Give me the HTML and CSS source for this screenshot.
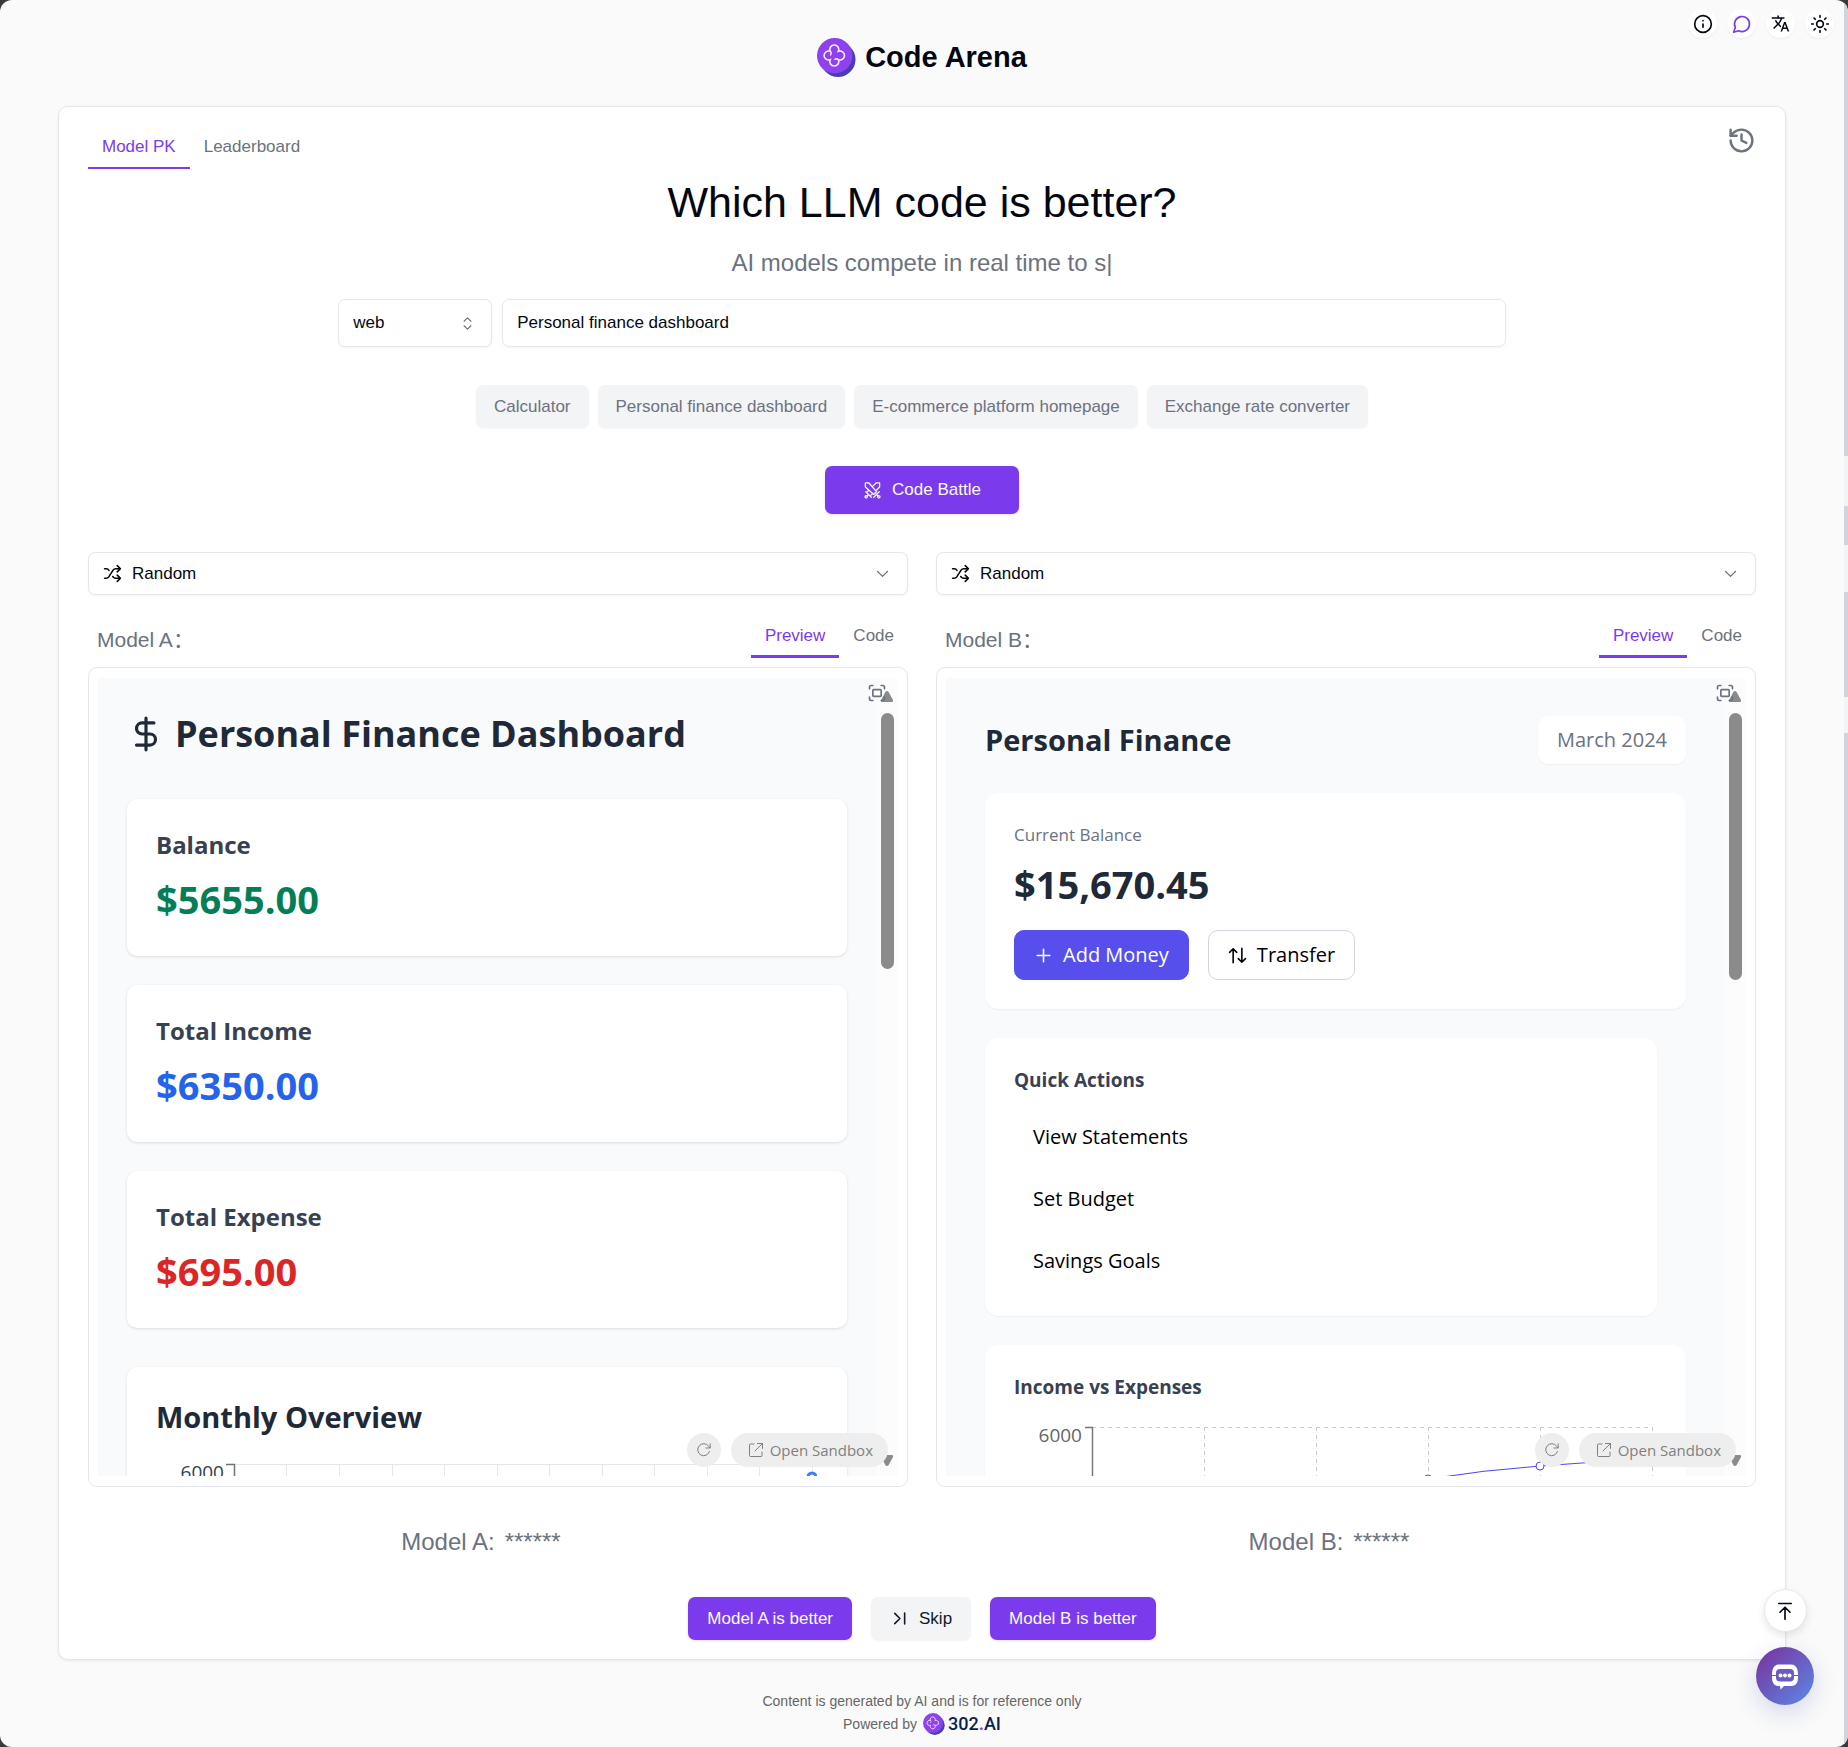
FILE: index.html
```html
<!DOCTYPE html>
<html lang="en">
<head>
<meta charset="utf-8">
<meta name="viewport" content="width=device-width, initial-scale=1">
<title>Code Arena</title>
<link rel="stylesheet" href="styles.css">
</head>
<body>
<svg class="sprite" aria-hidden="true">
  <symbol id="logo" viewBox="0 0 39 39">
    <circle cx="21" cy="21.500" r="17.500" fill="#4a3cb4"/>
    <circle cx="17.700" cy="17.700" r="17.700" fill="#8d42ee"/>
    <path d="M13.200 13.300a4.500 4.500 0 1 1 8.200 0a4.500 4.500 0 1 1 0 8.400a4.500 4.500 0 1 1-8.200 0a4.500 4.500 0 1 1 0-8.400z" fill="none" stroke="#fbe9ff" stroke-width="1.600"/>
    <path d="M13.200 13.300q2 2 0 4.200M21.400 21.700q-2-2-4 0" fill="none" stroke="#fbe9ff" stroke-width="1.300"/>
  </symbol>
  <symbol id="shuffle" viewBox="0 0 24 24"><path d="m18 14 4 4-4 4M18 2l4 4-4 4M2 18h1.973a4 4 0 0 0 3.300-1.700l5.454-8.600a4 4 0 0 1 3.300-1.700H22M2 6h1.972a4 4 0 0 1 3.600 2.200M22 18h-6.041a4 4 0 0 1-3.300-1.800l-.359-.450"/></symbol>
  <symbol id="chevron" viewBox="0 0 15 15"><path d="M3 5.500 7.500 10 12 5.500"/></symbol>
  <symbol id="expand" viewBox="0 0 24 24"><path d="M3 7V5a2 2 0 0 1 2-2h2M17 3h2a2 2 0 0 1 2 2v2M21 17v2a2 2 0 0 1-2 2h-2M7 21H5a2 2 0 0 1-2-2v-2"/><rect x="7" y="8" width="10" height="8" rx="1"/></symbol>
  <symbol id="reload" viewBox="0 0 16 16"><path d="M13.500 9.500A6 6 0 1 1 12.600 4.200L14 5.800M14.200 1.800v4.200H10"/></symbol>
  <symbol id="external" viewBox="0 0 16 16"><path d="M6 2H2.500a1 1 0 0 0-1 1v10.500a1 1 0 0 0 1 1H13a1 1 0 0 0 1-1V10M9.500 1.500h5v5M14.500 1.500 7 9"/></symbol>
</svg>
<div class="page">
  <div class="page-main">
    <header class="header">
      <div class="brand"><svg class="brand-logo"><use href="#logo"/></svg><h1 class="brand-name">Code Arena</h1></div>
      <nav class="tools" aria-label="Tools">
        <button class="tool" aria-label="About"><svg class="ico ico-20" viewBox="0 0 24 24"><circle cx="12" cy="12" r="10"/><path d="M12 16v-4M12 8h.01"/></svg></button>
        <button class="tool tool-accent" aria-label="Feedback"><svg class="ico ico-20" viewBox="0 0 24 24"><path d="M7.900 20A9 9 0 1 0 4 16.100L2 22Z"/></svg></button>
        <button class="tool" aria-label="Language"><svg class="ico-fill" viewBox="0 0 24 24"><path d="m12.870 15.070-2.540-2.510.03-.03c1.740-1.940 2.980-4.170 3.710-6.530H17V4h-7V2H8v2H1v1.990h11.170C11.500 7.920 10.440 9.750 9 11.350 8.070 10.320 7.300 9.190 6.690 8h-2c.73 1.630 1.730 3.170 2.980 4.560l-5.090 5.020L4 19l5-5 3.110 3.110.76-2.040zM18.500 10h-2L12 22h2l1.120-3h4.750L21 22h2l-4.500-12zm-2.620 7 1.620-4.330L19.120 17h-3.240z"/></svg></button>
        <button class="tool" aria-label="Theme"><svg class="ico ico-20" viewBox="0 0 24 24"><circle cx="12" cy="12" r="4"/><path d="M12 2v2M12 20v2M4.930 4.930l1.410 1.410M17.660 17.660l1.410 1.410M2 12h2M20 12h2M6.340 17.660l-1.410 1.410M19.070 4.930l-1.410 1.410"/></svg></button>
      </nav>
    </header>

    <main class="board">
      <div class="board-top">
        <div class="tabs">
          <button class="tab is-active">Model PK</button><button class="tab">Leaderboard</button>
        </div>
        <button class="history" aria-label="History"><svg class="ico ico-29" viewBox="0 0 24 24"><path d="M3 12a9 9 0 1 0 9-9 9.750 9.750 0 0 0-6.740 2.740L3 8"/><path d="M3 3v5h5M12 7v5l4 2"/></svg></button>
      </div>

      <h2 class="title">Which LLM code is better?</h2>
      <p class="subtitle">AI models compete in real time to s|</p>

      <form class="prompt">
        <div class="pick pick-type">
          <select class="pick-field" aria-label="Type"><option>web</option></select>
          <svg class="ico pick-arrow" viewBox="0 0 15 15"><path d="M4.500 5.500 7.500 2.500l3 3M4.500 9.500l3 3 3-3"/></svg>
        </div>
        <input class="prompt-text" type="text" aria-label="Prompt" value="Personal finance dashboard">
      </form>

      <div class="chips">
        <button class="chip">Calculator</button>
        <button class="chip">Personal finance dashboard</button>
        <button class="chip">E-commerce platform homepage</button>
        <button class="chip">Exchange rate converter</button>
      </div>

      <button class="btn btn-primary btn-battle"><svg class="ico ico-19 ico-swords" viewBox="0 0 24 24"><path d="M3 2.500h4.500L17 13.500l-3.500 3.500L3 7.500zM12.500 6.500l4-4H21v5l-4.500 4.500M7.500 11.500l-3 3M9.500 18.500l3-3M3.500 13.500l7 7M20.500 13.500l-7 7M7 17l-2 2M17 17l2 2"/><circle cx="4" cy="20" r="1.500"/><circle cx="20" cy="20" r="1.500"/></svg>Code Battle</button>

      <div class="arena">
        <section class="side">
          <div class="pick pick-model">
            <svg class="ico ico-19 pick-icon"><use href="#shuffle"/></svg>
            <select class="pick-field" aria-label="Model A choice"><option>Random</option></select>
            <svg class="ico pick-arrow"><use href="#chevron"/></svg>
          </div>
          <div class="side-bar">
            <h3 class="side-name">Model A：</h3>
            <div class="tabs tabs-side"><button class="tab is-active">Preview</button><button class="tab">Code</button></div>
          </div>
          <div class="frame">
            <div class="view">
              <div class="doc doc-a">
                <h1 class="a-title"><svg class="ico a-dollar" viewBox="0 0 24 24"><path d="M12 2v20M17 5H9.500a3.500 3.500 0 0 0 0 7h5a3.500 3.500 0 0 1 0 7H6"/></svg>Personal Finance Dashboard</h1>
                <div class="a-cards">
                  <div class="a-card"><h2 class="a-label">Balance</h2><p class="a-sum green">$5655.00</p></div>
                  <div class="a-card"><h2 class="a-label">Total Income</h2><p class="a-sum blue">$6350.00</p></div>
                  <div class="a-card"><h2 class="a-label">Total Expense</h2><p class="a-sum red">$695.00</p></div>
                </div>
                <div class="a-card">
                  <h2 class="a-heading">Monthly Overview</h2>
                  <svg class="chart chart-a" width="661" height="60" role="img" aria-label="Monthly chart">
                    <g stroke="#e5e7eb" stroke-width="1"><path d="M78 16.500H656"/><path d="M130.500 17v43M183.500 17v43M236.500 17v43M288.500 17v43M341.500 17v43M393.500 17v43M446.500 17v43M498.500 17v43M551.500 17v43M603.500 17v43M656.500 17v43"/></g>
                    <path d="M70 16.500h8.500V60" fill="none" stroke="#6b7280" stroke-width="1.500"/>
                    <circle cx="656" cy="29" r="4" fill="#fff" stroke="#3b82f6" stroke-width="3"/>
                    <text x="68" y="31" text-anchor="end" class="tick-a">6000</text>
                  </svg>
                </div>
              </div>
              <div class="rail" aria-hidden="true"><svg class="rail-up" viewBox="0 0 12 11"><path d="M6 0q1 0 1.600 1L12 9q.3 2-1 2H1q-1.300 0-1-2L4.400 1Q5 0 6 0z"/></svg><div class="rail-thumb thumb-a"></div><svg class="rail-down" viewBox="0 0 12 11"><path d="M6 11q1 0 1.600-1L12 2q.3-2-1-2H1q-1.300 0-1 2l4.400 8q.6 1 1.600 1z"/></svg></div>
              <button class="expand" aria-label="Full screen"><svg class="ico ico-20"><use href="#expand"/></svg></button>
              <div class="pills"><button class="pill pill-round" aria-label="Reload"><svg class="ico ico-16"><use href="#reload"/></svg></button><a class="pill pill-open" href="#sandbox-a"><svg class="ico ico-16"><use href="#external"/></svg>Open Sandbox</a></div>
            </div>
          </div>
        </section>

        <section class="side">
          <div class="pick pick-model">
            <svg class="ico ico-19 pick-icon"><use href="#shuffle"/></svg>
            <select class="pick-field" aria-label="Model B choice"><option>Random</option></select>
            <svg class="ico pick-arrow"><use href="#chevron"/></svg>
          </div>
          <div class="side-bar">
            <h3 class="side-name">Model B：</h3>
            <div class="tabs tabs-side"><button class="tab is-active">Preview</button><button class="tab">Code</button></div>
          </div>
          <div class="frame">
            <div class="view">
              <div class="doc doc-b">
                <div class="b-head"><h1 class="b-title">Personal Finance</h1><span class="b-date">March 2024</span></div>
                <div class="b-card">
                  <p class="b-caption">Current Balance</p>
                  <p class="b-sum">$15,670.45</p>
                  <div class="b-actions">
                    <button class="b-btn b-btn-fill"><svg class="ico ico-19" viewBox="0 0 24 24"><path d="M12 4v16M4 12h16"/></svg>Add Money</button>
                    <button class="b-btn"><svg class="ico ico-19" viewBox="0 0 24 24"><path d="M6.500 21V3.500M2 8l4.500-4.500L11 8M17.500 3v17.500M13 16l4.500 4.500L22 16"/></svg>Transfer</button>
                  </div>
                </div>
                <div class="b-card b-quick">
                  <h2 class="b-heading">Quick Actions</h2>
                  <div class="b-list">
                    <button class="b-item">View Statements</button>
                    <button class="b-item">Set Budget</button>
                    <button class="b-item">Savings Goals</button>
                  </div>
                </div>
                <div class="b-card">
                  <h2 class="b-heading">Income vs Expenses</h2>
                  <svg class="chart chart-b" width="643" height="70" role="img" aria-label="Income and expenses chart">
                    <g fill="none" stroke="#ccc" stroke-width="1" stroke-dasharray="4 4"><path d="M78 8.500h560"/><path d="M190.500 8v62M302.500 8v62M414.500 8v62M526.500 8v62M638.500 8v62"/></g>
                    <path d="M71 8.500h7.500V70" fill="none" stroke="#777" stroke-width="1.500"/>
                    <path d="M414 60Q470 51 526 47T638 39" fill="none" stroke="#4f46e5" stroke-width="1"/>
                    <g fill="#fff" stroke="#4f46e5"><circle cx="414" cy="60" r="4"/><circle cx="526" cy="47" r="4"/></g>
                    <text x="68" y="23" text-anchor="end" class="tick-b">6000</text>
                  </svg>
                </div>
              </div>
              <div class="rail" aria-hidden="true"><svg class="rail-up" viewBox="0 0 12 11"><path d="M6 0q1 0 1.600 1L12 9q.3 2-1 2H1q-1.300 0-1-2L4.400 1Q5 0 6 0z"/></svg><div class="rail-thumb thumb-b"></div><svg class="rail-down" viewBox="0 0 12 11"><path d="M6 11q1 0 1.600-1L12 2q.3-2-1-2H1q-1.300 0-1 2l4.400 8q.6 1 1.600 1z"/></svg></div>
              <button class="expand" aria-label="Full screen"><svg class="ico ico-20"><use href="#expand"/></svg></button>
              <div class="pills"><button class="pill pill-round" aria-label="Reload"><svg class="ico ico-16"><use href="#reload"/></svg></button><a class="pill pill-open" href="#sandbox-b"><svg class="ico ico-16"><use href="#external"/></svg>Open Sandbox</a></div>
            </div>
          </div>
        </section>
      </div>

      <div class="reveal">
        <p class="reveal-name"><span>Model A:</span><span>******</span></p>
        <p class="reveal-name"><span>Model B:</span><span>******</span></p>
      </div>

      <div class="votes">
        <button class="btn btn-primary">Model A is better</button>
        <button class="btn btn-soft"><svg class="ico ico-19" viewBox="0 0 24 24"><path d="m6 5.500 6.500 6.500L6 18.500M18.500 5v14"/></svg>Skip</button>
        <button class="btn btn-primary">Model B is better</button>
      </div>
    </main>

    <footer class="footer">
      <p>Content is generated by AI and is for reference only</p>
      <p class="powered">Powered by <a class="powered-link" href="#302"><svg class="powered-logo"><use href="#logo"/></svg><span>302<b class="dot">.</b>AI</span></a></p>
    </footer>
  </div>
  <div class="gutter" aria-hidden="true"></div>
</div>

<div class="floats">
  <button class="to-top" aria-label="Back to top"><svg class="ico ico-20" viewBox="0 0 24 24"><path d="M4.500 3h15M12 22V8M6 13.500 12 7.500l6 6"/></svg></button>
  <button class="chat" aria-label="Chat"><svg width="32" height="32" viewBox="0 0 32 32"><path d="M10 4.500h12q5 0 6.500 5.500.5 2 .5 6t-.5 5.500q-1.500 4.500-6.500 4.500h-7l-3.500 3.500L11 26h-1q-5 0-6.500-4.500Q3 20 3 16t.5-6Q5 4.500 10 4.500z" fill="#fff"/><path d="M11 9h10q4 0 4 4v4.500q0 4-4 4H11q-4 0-4-4V13q0-4 4-4z" fill="#6a5cc4"/><path d="M2 15.500h5M25 15.500h5" stroke="#6a5cc4" stroke-width="1"/><g fill="#fff"><circle cx="11.500" cy="15.500" r="2"/><circle cx="16" cy="15.500" r="2"/><circle cx="20.500" cy="15.500" r="2"/></g></svg></button>
</div>
</body>
</html>
```
FILE: styles.css
```css
*, *::before, *::after { box-sizing: border-box; }
body { margin: 0; background: #3a3a3a; color: #030712; font: 17px/24px "Liberation Sans", "Noto Sans CJK SC", Arial, sans-serif; }
h1, h2, h3, p { margin: 0; font-weight: 400; }
button, input, select { font: inherit; color: inherit; margin: 0; padding: 0; border: 0; background: none; }
button { cursor: pointer; }
a { color: inherit; text-decoration: none; }
.sprite { display: none; }

.ico { display: block; flex: none; fill: none; stroke: currentColor; stroke-width: 2; stroke-linecap: round; stroke-linejoin: round; }
.ico-16 { width: 16px; height: 16px; stroke-width: 1; }
.ico-19 { width: 19px; height: 19px; }
.ico-20 { width: 20px; height: 20px; }
.ico-29 { width: 29px; height: 29px; }
.ico-swords { stroke-width: 1.6; }

.page { display: flex; min-height: 100vh; background: #fafafa; border-radius: 12px; overflow: hidden; }
.page-main { flex: 1; min-width: 0; padding: 0 58px; }
.gutter { width: 4px; background: linear-gradient(#d1d5db 456px, #f3f4f6 456px 506px, #d1d5db 506px 545px, #f3f4f6 545px 592px, #d1d5db 592px 697px, #f3f4f6 697px 733px, #d1d5db 733px); }

.header { display: grid; grid-template-columns: 1fr auto 1fr; height: 106px; margin: 0 -48px; padding-top: 9px; }
.brand { grid-column: 2; display: flex; align-items: center; gap: 9px; height: 96px; }
.brand-logo { width: 39px; height: 39px; }
.brand-name { font-size: 29px; line-height: 38px; font-weight: 700; }
.tools { grid-column: 3; justify-self: end; display: flex; gap: 10px; }
.tool { display: grid; place-items: center; width: 29px; height: 29px; border-radius: 50%; background: #fff; box-shadow: 0 1px 2px rgba(0, 0, 0, .06); }
.tool-accent { color: #7c3aed; }
.ico-fill { width: 19px; height: 19px; fill: currentColor; }

.board { background: #fff; border: 1px solid #e5e7eb; border-radius: 10px; padding: 19px 29px; box-shadow: 0 1px 3px rgba(0, 0, 0, .08); display: flex; flex-direction: column; }
.board-top { display: flex; justify-content: space-between; align-items: flex-start; }
.tabs { display: flex; }
.tab { padding: 9px 14px 8px; border-bottom: 2px solid transparent; color: #6b7280; }
.tab.is-active { color: #7c3aed; border-color: #7c3aed; }
.history { color: #6b7280; }

.title { font-size: 43px; line-height: 58px; text-align: center; margin-top: 4px; }
.subtitle { font-size: 24px; line-height: 34px; text-align: center; color: #6b7280; margin-top: 15px; }

.pick { display: grid; align-items: center; border: 1px solid #e5e7eb; border-radius: 7px; box-shadow: 0 1px 2px rgba(0, 0, 0, .05); background: #fff; }
.pick-field { grid-area: 1 / 1 / 2 / -1; width: 100%; height: 100%; appearance: none; padding: 0 14px; outline: 0; }
.pick-arrow { grid-row: 1; grid-column: -2; width: 17px; height: 17px; stroke: #71717a; stroke-width: 1; pointer-events: none; }
.pick-type { grid-template-columns: 1fr 17px; width: 154px; height: 48px; padding-right: 15px; }
.pick-model { grid-template-columns: 19px 1fr 17px; height: 43px; padding: 0 16px 0 14px; }
.pick-model .pick-field { padding: 0 0 0 29px; }
.pick-icon { grid-row: 1; grid-column: 1; pointer-events: none; }

.prompt { display: flex; gap: 10px; width: 70%; min-width: 600px; margin: 19px auto 0; }
.prompt-text { flex: 1; min-width: 0; height: 48px; padding: 0 14px; border: 1px solid #e5e7eb; border-radius: 7px; box-shadow: 0 1px 2px rgba(0, 0, 0, .05); }

.chips { display: flex; flex-wrap: wrap; justify-content: center; gap: 9px; margin-top: 38px; }
.chip { height: 43px; padding: 0 18px; border-radius: 7px; background: #f3f4f6; color: #6b7280; box-shadow: 0 1px 2px rgba(0, 0, 0, .04); }

.btn { display: flex; align-items: center; justify-content: center; gap: 10px; height: 43px; padding: 0 19px; border-radius: 7px; box-shadow: 0 1px 3px rgba(0, 0, 0, .12); }
.btn-primary { background: #7c3aed; color: #f9fafb; }
.btn-soft { background: #f3f4f6; color: #111827; box-shadow: 0 1px 2px rgba(0, 0, 0, .05); }
.btn-battle { align-self: center; height: 48px; padding: 0 38px; margin-top: 38px; }

.arena { display: grid; grid-template-columns: repeat(2, minmax(0, 1fr)); gap: 28px; margin-top: 38px; }
.side-bar { display: flex; justify-content: space-between; padding-left: 9px; margin-top: 19px; }
.side-name { font-size: 21px; line-height: 30px; color: #6b7280; padding-top: 11px; }
.tabs-side .tab { padding: 10px 14px 7px; border-bottom-width: 3px; }
.frame { aspect-ratio: 1; border: 1px solid #e5e7eb; border-radius: 9px; padding: 10px 9px; margin-top: 9px; }
.view { position: relative; display: flex; height: 100%; overflow: hidden; background: #f9fafb; font-family: "Open Sans", "Noto Sans", sans-serif; }
.doc { flex: 1; min-width: 0; }

.rail { display: flex; flex-direction: column; align-items: center; width: 22px; padding: 13px 0 10px; background: #fcfcfc; }
.rail svg { width: 12px; height: 11px; fill: #8b8b8b; flex: none; }
.rail-thumb { width: 13px; margin: 11px 0 auto; border-radius: 7px; background: #8b8b8b; }
.thumb-a { height: 256px; }
.thumb-b { height: 267px; }
.expand { position: absolute; top: 5px; right: 11px; color: #6b7280; }
.pills { position: absolute; right: 10px; bottom: 9px; display: flex; gap: 10px; }
.pill { display: flex; align-items: center; justify-content: center; gap: 6px; height: 34px; border-radius: 17px; background: #eee; color: #808080; font-size: 15px; line-height: 24px; }
.pill-round { width: 34px; }
.pill-open { padding: 0 15px 0 17px; }

.doc-a { padding: 29px; }
.a-title { display: flex; align-items: center; gap: 10px; font-size: 36px; line-height: 54px; font-weight: 700; color: #1f2937; margin-bottom: 38px; white-space: nowrap; }
.a-dollar { width: 38px; height: 38px; }
.a-cards { display: grid; gap: 29px; margin-bottom: 39px; }
.a-card { background: #fff; border-radius: 10px; padding: 29px; box-shadow: 0 1px 3px rgba(0, 0, 0, .12); }
.a-label { font-size: 24px; line-height: 34px; font-weight: 700; color: #374151; margin-bottom: 10px; }
.a-sum { font-size: 38px; line-height: 55px; font-weight: 700; }
.green { color: #047e56; }
.blue { color: #2563eb; }
.red { color: #dc2626; }
.a-heading { font-size: 29px; line-height: 42px; font-weight: 700; color: #1f2937; margin-bottom: 10px; }
.chart { display: block; }
.tick-a { font-size: 19px; fill: #374151; }
.tick-b { font-size: 19px; fill: #666; }

.doc-b { display: flex; flex-direction: column; gap: 29px; padding: 38px 38px 38px 39px; }
.b-head { display: flex; align-items: center; justify-content: space-between; height: 48px; }
.b-title { font-size: 29px; line-height: 42px; font-weight: 700; color: #1f2937; }
.b-date { padding: 11px 19px; line-height: 26px; font-size: 20px; border-radius: 10px; background: #fff; color: #6b7280; box-shadow: 0 1px 2px rgba(0, 0, 0, .05); }
.b-card { background: #fff; border-radius: 14px; padding: 29px; box-shadow: 0 1px 2px rgba(0, 0, 0, .05); }
.b-caption { font-size: 17px; line-height: 26px; color: #6b7280; }
.b-sum { font-size: 38px; line-height: 53px; font-weight: 700; color: #1f2937; margin: 10px 0 19px; }
.b-actions { display: flex; gap: 19px; }
.b-btn { display: flex; align-items: center; gap: 10px; height: 50px; padding: 0 19px; font-size: 20px; border: 1px solid #d1d5db; border-radius: 10px; color: #000; }
.b-btn-fill { background: #574feb; border-color: #574feb; color: #fff; }
.b-quick { margin-right: 29px; }
.b-heading { font-size: 19px; line-height: 26px; font-weight: 700; color: #374151; }
.b-list { display: flex; flex-direction: column; gap: 10px; margin-top: 18px; }
.b-item { height: 52px; padding: 0 19px; text-align: left; font-size: 20px; color: #000; }
.chart-b { margin-top: 19px; }

.reveal { display: grid; grid-template-columns: 1fr 1fr; gap: 28px; margin-top: 38px; font-size: 24px; line-height: 34px; color: #6b7280; }
.reveal-name { display: flex; justify-content: center; gap: 10px; padding-right: 34px; }
.votes { display: flex; justify-content: center; gap: 19px; margin-top: 38px; }

.footer { padding: 29px 0 8px; text-align: center; font-size: 14px; line-height: 24px; color: #666; }
.powered { display: flex; justify-content: center; align-items: center; gap: 6px; line-height: 22px; }
.powered-link { display: flex; align-items: center; gap: 3px; color: #0b1f4d; font: 500 18px/22px Roboto, "Open Sans", sans-serif; }
.powered-logo { width: 22px; height: 22px; }
.dot { color: #9333ea; }

.floats { position: fixed; right: 34px; bottom: 42px; display: flex; flex-direction: column; align-items: center; gap: 15px; }
.to-top { display: grid; place-items: center; width: 43px; height: 43px; border: 1px solid #e5e7eb; border-radius: 50%; background: #fff; box-shadow: 0 4px 8px rgba(0, 0, 0, .1); }
.chat { display: grid; place-items: center; width: 58px; height: 58px; border-radius: 50%; background: linear-gradient(135deg, #7a2f9c, #5a8ae6); box-shadow: 0 8px 24px rgba(60, 80, 180, .2); }
```
